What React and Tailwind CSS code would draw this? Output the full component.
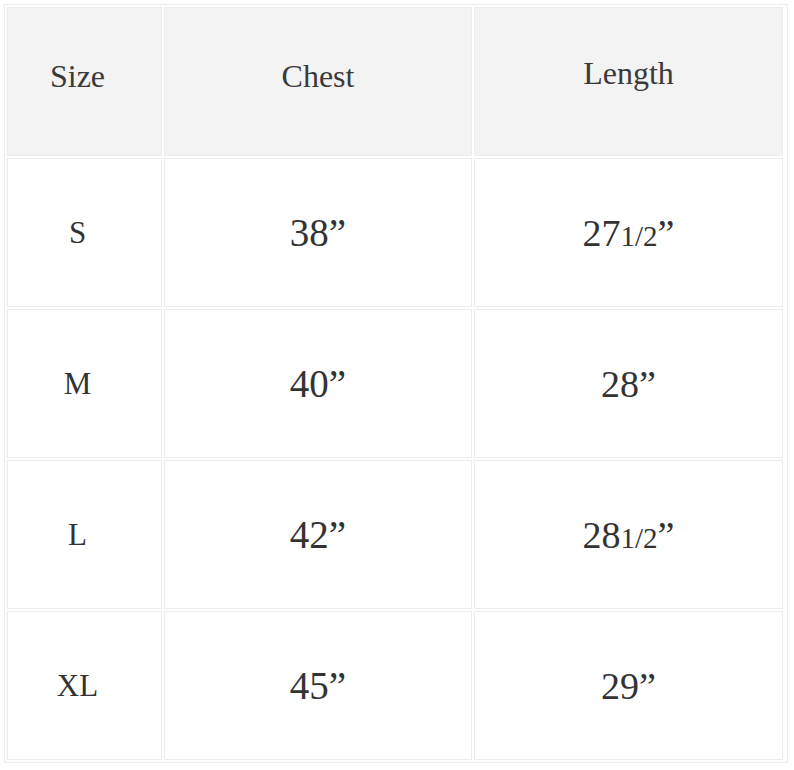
import React from 'react';

const rows = [
  { size: 'S', chest: '38', length: '27', half: true },
  { size: 'M', chest: '40', length: '28', half: false },
  { size: 'L', chest: '42', length: '28', half: true },
  { size: 'XL', chest: '45', length: '29', half: false },
];

export default function App() {
  return (
    <div className="w-[794px] h-[770px] bg-white pt-[4px] pl-[4px] font-['Liberation_Serif','Times_New_Roman',serif]">
      {/* size chart table */}
      <div className="w-[784px] border border-[#ececec] p-[2px]">
        <div className="grid grid-cols-[155px_308px_309px] gap-[2px]">
          {/* header */}
          <div className="h-[149px] bg-[#f3f3f3] border border-[#ececec] flex items-center justify-center pb-[12px] pr-[14px] text-[32px] text-[#3a3a3a]">
            Size
          </div>
          <div className="h-[149px] bg-[#f3f3f3] border border-[#ececec] flex items-center justify-center pb-[12px] text-[32px] text-[#3a3a3a]">
            Chest
          </div>
          <div className="h-[149px] bg-[#f3f3f3] border border-[#ececec] flex items-center justify-center pb-[18px] text-[32px] text-[#3a3a3a]">
            Length
          </div>

          {rows.map((r) => (
            <React.Fragment key={r.size}>
              <div className="h-[149px] border border-[#ececec] flex items-center justify-center pt-[2px] pr-[14px] text-[31px] text-[#333]">
                {r.size}
              </div>
              <div className="h-[149px] border border-[#ececec] flex items-center justify-center pt-[2px] text-[39px] text-[#333]">
                {r.chest}”
              </div>
              <div className="h-[149px] border border-[#ececec] flex items-center justify-center pt-[2px] text-[38px] text-[#333]">
                <span>
                  {r.length}
                  {r.half && <span className="text-[29px]">1/2</span>}”
                </span>
              </div>
            </React.Fragment>
          ))}
        </div>
      </div>
    </div>
  );
}
